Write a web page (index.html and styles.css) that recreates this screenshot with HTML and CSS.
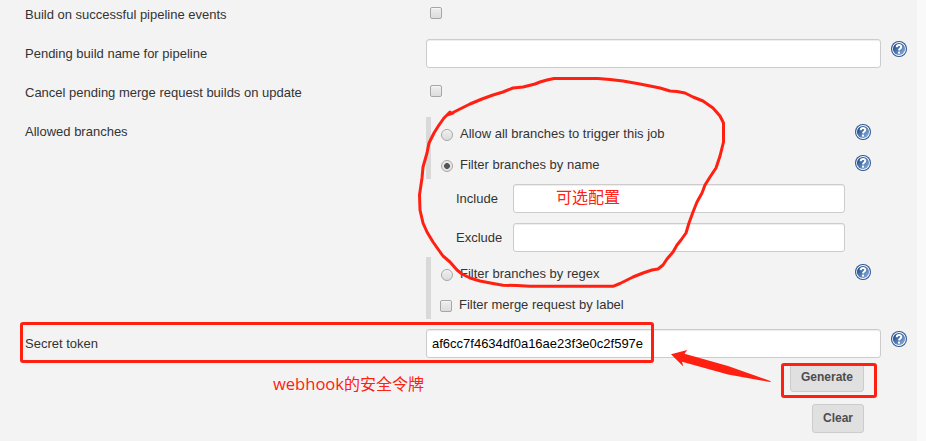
FILE: index.html
```
<!DOCTYPE html>
<html lang="en">
<head>
<meta charset="utf-8">
<title>Build trigger configuration</title>
<link rel="stylesheet" href="styles.css">
</head>
<body>
<svg class="defs" aria-hidden="true">
  <linearGradient id="disc" x1="0" y1="0" x2="1" y2="1">
    <stop offset="0.15" stop-color="#204d8b"/><stop offset="0.85" stop-color="#7fa6d5"/>
  </linearGradient>
  <symbol id="help" viewBox="0 0 16 16">
    <circle cx="8" cy="8" r="8" fill="#2d5592"/>
    <circle cx="8" cy="8" r="6.9" fill="#fff"/>
    <circle cx="8" cy="8" r="6.1" fill="url(#disc)"/>
    <path d="M5.7 6.2C5.8 3.3 10.4 3.4 10.3 5.9C10.2 7.5 8.1 7.4 8 9.4" fill="none" stroke="#fff" stroke-width="2"/>
    <rect x="7" y="10.6" width="2" height="2" fill="#fff"/>
  </symbol>
</svg>
<main class="panel">
  <div class="row first">
    <label class="name">Build on successful pipeline events</label>
    <div class="setting"><input type="checkbox" class="check"></div>
  </div>
  <div class="row">
    <label class="name">Pending build name for pipeline</label>
    <div class="setting"><input type="text" class="text"></div>
    <svg class="help"><use href="#help"/></svg>
  </div>
  <div class="row">
    <label class="name">Cancel pending merge request builds on update</label>
    <div class="setting"><input type="checkbox" class="check"></div>
  </div>
  <div class="row branches">
    <label class="name">Allowed branches</label>
    <div class="setting options">
      <div class="option"><input type="radio" name="b" class="radio"><label>Allow all branches to trigger this job</label><svg class="help"><use href="#help"/></svg></div>
      <div class="option"><input type="radio" name="b" class="radio" checked><label>Filter branches by name</label><svg class="help"><use href="#help"/></svg></div>
      <div class="nested"><label>Include</label><input type="text" class="text"></div>
      <div class="nested"><label>Exclude</label><input type="text" class="text"></div>
      <div class="option"><input type="radio" name="b" class="radio"><label>Filter branches by regex</label><svg class="help"><use href="#help"/></svg></div>
      <div class="option"><input type="checkbox" class="check"><label>Filter merge request by label</label></div>
    </div>
  </div>
  <div class="row secret">
    <label class="name">Secret token</label>
    <div class="setting"><input type="text" class="text" value="af6cc7f4634df0a16ae23f3e0c2f597e"></div>
    <svg class="help"><use href="#help"/></svg>
  </div>
  <div class="actions">
    <button class="button">Generate</button>
    <button class="button">Clear</button>
  </div>
</main>
<svg class="marks" viewBox="0 0 926 441">
  <g fill="none" stroke="#ff2012" stroke-width="3" stroke-linejoin="round" stroke-linecap="round">
    <path d="M453 113L447 115L450 112L444 118L439 125L434 133L429 143L427 153L423 167L422 178L419.5 195L420 210L423 223L427 232L433 242L443 256L450 262L457 270L462 274L470 278L480 281L493 283.5L503 285.3L517 285.5L530 286.3H613L620 283.5L633 277L643 273L652 270L658 269L663 265L667 259L673 252L677 245L681 240L686 233L689 223L693 212L697 202L702 193L705 185L710 177L716 168L720 156L723.5 142V123L720 116L713 108L703 101L693 97L685 93L677 91.5L670 91L660 88L650 86L640 84L623 81L610 79.5L598 78.5H554L547 80L540 82L535 84L523 87L513 88L503 92L493 95L482 99L470 104L460 109L450 114"/>
    <rect x="21.5" y="323.5" width="631" height="38" rx="1.5"/>
    <rect x="782.5" y="364.5" width="93" height="32" rx="1.5"/>
  </g>
  <path d="M671 354.3L687.3 350L684.5 353.8L728 366L771 381.3L770 382L728 374.5L682 361.8L683.3 366.5Z" fill="#ff2012"/>
  <text class="note" x="556" y="202.5" textLength="64" lengthAdjust="spacingAndGlyphs">可选配置</text>
  <text class="note latin" x="273" y="390" textLength="71" lengthAdjust="spacingAndGlyphs">webhook</text>
  <text class="note" x="344" y="390" textLength="80" lengthAdjust="spacingAndGlyphs">的安全令牌</text>
</svg>
</body>
</html>
```
FILE: styles.css
```
* { box-sizing: border-box; }
body {
  margin: 0;
  height: 441px;
  overflow: hidden;
  position: relative;
  background: #f9f9f9;
  color: #333;
  font: 13px/18px "Liberation Sans", Arial, sans-serif;
}
.defs { position: absolute; width: 0; height: 0; }
.panel { width: 917px; height: 441px; background: #f3f3f3; }
.row { display: flex; height: 39px; padding: 10px 10px 0 25px; }
.first { height: 34px; padding-top: 5px; }
.name { width: 401px; flex: none; padding-top: 1px; }
.setting { width: 455px; flex: none; }
.row > .setting > .text { display: block; margin-top: -5px; }
.help { width: 16px; height: 16px; flex: none; display: block; }
.row > .help { margin: -3px 0 0 10px; }
.text {
  width: 100%;
  height: 29px;
  margin: 0;
  padding: 0 5px;
  border: 1px solid #ccc;
  border-radius: 3px;
  background: #fff;
  box-shadow: inset 0 1px 1px rgba(0, 0, 0, .075);
  color: #000;
  font: inherit;
}
.check, .radio {
  appearance: none;
  flex: none;
  width: 12px;
  height: 12px;
  margin: 0;
  border: 1px solid #a6a6a6;
  border-radius: 2px;
  background: linear-gradient(#eee, #dcdcdc);
  box-shadow: inset 0 1px 1px #f7f7f7;
}
.row > .setting > .check { display: block; margin: 2px 0 0 4px; }
.radio { border-radius: 50%; margin: 4px 8px 0 10px; }
.radio:checked { background: radial-gradient(circle, #555 0 2.6px, #e3e3e3 3.2px); }
.branches { height: 212px; }
.options { margin-top: -5px; }
.option {
  display: flex;
  align-items: center;
  height: 31px;
  border-left: 5px solid #d9d9d9;
  padding-right: 10px;
}
.option label { flex: 1; padding-top: 2px; }
.option .radio + label { margin-left: -1px; }
.option .check { margin: 4px 7px 0 9px; }
.option .help { margin-top: -1px; }
.nested { display: flex; align-items: center; height: 39px; padding: 0 36px 0 30px; }
.nested label { width: 57px; flex: none; }
.actions {
  display: flex;
  flex-direction: column;
  align-items: flex-end;
  gap: 12px;
  padding-right: 53px;
}
.button {
  height: 29px;
  padding: 0 10px;
  border: 1px solid #ccc;
  border-radius: 3px;
  background: #e0e0e0;
  color: #4d4d4d;
  font: bold 12px/25px "Liberation Sans", Arial, sans-serif;
}
.marks { position: absolute; left: 0; top: 0; width: 926px; height: 441px; pointer-events: none; }
.note { fill: #ff2012; font: 16px "Noto Sans CJK SC", sans-serif; }
.latin { font: 17px "Open Sans", sans-serif; }
```
